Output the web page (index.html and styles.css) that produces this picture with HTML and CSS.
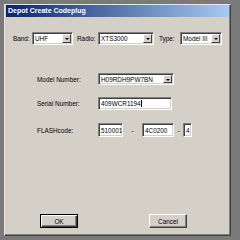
FILE: index.html
```html
<!DOCTYPE html>
<html lang="en">
<head>
    <meta charset="UTF-8">
    <title>Depot Create Codeplug</title>
    <link rel="stylesheet" href="styles.css">
</head>
<body>
    <div class="dialog">
        <div class="title-bar">Depot Create Codeplug</div>

        <div class="top-row">
            <span class="label band-label">Band:</span>
            <div class="combo band-combo"><span class="value">UHF</span><span class="arrow"></span></div>
            <span class="label radio-label">Radio:</span>
            <div class="combo radio-combo"><span class="value">XTS3000</span><span class="arrow"></span></div>
            <span class="label type-label">Type:</span>
            <div class="combo type-combo"><span class="value">Model III</span><span class="arrow"></span></div>
        </div>

        <div class="field-row model-row">
            <span class="label field-label">Model Number:</span>
            <div class="combo model-combo"><span class="value">H09RDH9PW7BN</span><span class="arrow"></span></div>
        </div>

        <div class="field-row serial-row">
            <span class="label field-label">Serial Number:</span>
            <div class="edit serial-edit"><span class="value">409WCR1194</span><span class="caret"></span></div>
        </div>

        <div class="field-row flash-row">
            <span class="label field-label">FLASHcode:</span>
            <div class="edit flash-a"><span class="value">510001</span></div>
            <span class="dash dash-a">-</span>
            <div class="edit flash-b"><span class="value">4C0200</span></div>
            <span class="dash dash-b">-</span>
            <div class="edit flash-c"><span class="value">4</span></div>
        </div>

        <div class="button-row">
            <div class="btn btn-ok"><span>OK</span></div>
            <div class="btn btn-cancel"><span>Cancel</span></div>
        </div>
    </div>
</body>
</html>
```

FILE: styles.css
```css
body {
    margin: 0;
    padding: 4px;
    background-color: #7a7a7a;
    font-family: "Liberation Sans", Arial, sans-serif;
    font-size: 6.4px;
    color: #000;
}

.dialog {
    width: 227px;
    height: 232px;
    box-sizing: border-box;
    background-color: #d4d0c8;
    border: 1px solid;
    border-color: #e8e6e0 #404040 #404040 #e8e6e0;
    box-shadow: inset -1px -1px 0 #808080;
    padding: 0 1px;
}

.title-bar {
    height: 12px;
    line-height: 12px;
    padding-left: 2px;
    background: linear-gradient(to right, #0a246a, #a6caf0);
    color: #fff;
    font-weight: bold;
    font-size: 7px;
}

.label {
    display: inline-block;
}

/* combo boxes and edits */
.combo, .edit {
    position: relative;
    box-sizing: border-box;
    background-color: #fff;
    border: 1px solid;
    border-color: #808080 #fff #fff #808080;
    box-shadow: inset 1px 1px 0 #404040, inset -1px -1px 0 #d4d0c8;
    display: flex;
    align-items: center;
    overflow: hidden;
    white-space: nowrap;
}

.combo .value, .edit .value {
    padding-left: 2px;
}

.arrow {
    position: absolute;
    right: 1px;
    top: 1px;
    bottom: 1px;
    width: 9px;
    box-sizing: border-box;
    background-color: #d4d0c8;
    border: 1px solid;
    border-color: #fff #404040 #404040 #fff;
}

.arrow::after {
    content: "";
    position: absolute;
    left: 2px;
    top: 3px;
    border-left: 2px solid transparent;
    border-right: 2px solid transparent;
    border-top: 2px solid #000;
}

.caret {
    width: 1px;
    height: 7px;
    background-color: #000;
}

.top-row {
    display: flex;
    align-items: center;
    margin-top: 15px;
    padding-left: 7px;
    height: 13px;
}

.band-label { width: 19px; }
.band-combo { width: 41px; height: 13px; }
.radio-label { width: 21px; margin-left: 4px; }
.radio-combo { width: 56px; height: 13px; }
.type-label { width: 21px; margin-left: 5px; }
.type-combo { width: 42px; height: 13px; }

.field-row {
    display: flex;
    align-items: center;
    padding-left: 31px;
}

.field-label {
    width: 61px;
}

.model-row { margin-top: 28px; height: 12px; }
.model-combo { width: 76px; height: 12px; }

.serial-row { margin-top: 12px; height: 13px; }
.serial-edit { width: 74px; height: 13px; }

.flash-row { margin-top: 13px; height: 14px; }
.flash-row .edit { height: 14px; }
.flash-a { width: 25px; }
.flash-b { width: 32px; }
.flash-c { width: 9px; }
.dash {
    width: 19px;
    text-align: center;
}
.dash-b { width: 9px; }

.button-row {
    display: flex;
    margin-top: 77px;
    padding-left: 34px;
}

.btn {
    width: 38px;
    height: 14px;
    box-sizing: border-box;
    display: flex;
    align-items: center;
    justify-content: center;
    background-color: #d4d0c8;
    border: 1px solid;
    border-color: #fff #404040 #404040 #fff;
    box-shadow: inset -1px -1px 0 #808080;
}

.btn-ok {
    border-color: #000;
    box-shadow: inset 1px 1px 0 #fff, inset -1px -1px 0 #404040, inset -2px -2px 0 #808080;
}

.btn-cancel {
    margin-left: 71px;
}
```
